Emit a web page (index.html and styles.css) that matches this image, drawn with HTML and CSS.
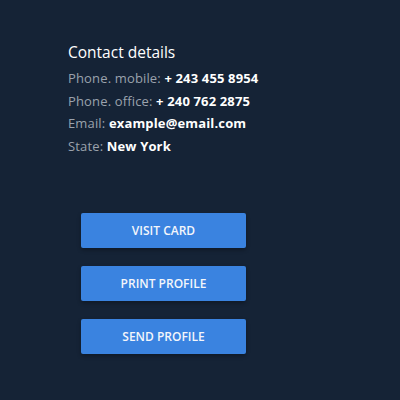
FILE: index.html
```html
<!DOCTYPE html>
<html>
<head>
<meta charset="utf-8">
<link rel="stylesheet" href="styles.css">
</head>
<body>
<div class="page">
  <section class="contact">
    <h2 class="title">Contact details</h2>
    <ul class="list">
      <li><span class="label">Phone. mobile:</span> <b>+ 243 455 8954</b></li>
      <li><span class="label">Phone. office:</span> <b>+ 240 762 2875</b></li>
      <li><span class="label">Email:</span> <b>example@email.com</b></li>
      <li><span class="label">State:</span> <b>New York</b></li>
    </ul>
  </section>
  <div class="actions">
    <button class="btn">VISIT CARD</button>
    <button class="btn">PRINT PROFILE</button>
    <button class="btn">SEND PROFILE</button>
  </div>
</div>
</body>
</html>
```
FILE: styles.css
```css
html, body {
  margin: 0;
  padding: 0;
  background: #152336;
  width: 400px;
  height: 400px;
  overflow: hidden;
}
.page {
  font-family: "Open Sans", "Liberation Sans", sans-serif;
  padding: 42px 0 0 68px;
}
.title {
  margin: 0 0 5px;
  font-size: 15.5px;
  font-weight: 400;
  color: #ffffff;
  line-height: 20px;
}
.list {
  list-style: none;
  margin: 0;
  padding: 0;
}
.list li {
  font-size: 13px;
  line-height: 22.7px;
  color: #ffffff;
  letter-spacing: 0.15px;
}
.label {
  color: #9aa2ad;
}
.list b {
  font-weight: 700;
}
.actions {
  display: flex;
  flex-direction: column;
  gap: 18px;
  margin: 55px 0 0 13px;
}
.btn {
  width: 165px;
  height: 35px;
  border: 0;
  border-radius: 2px;
  background: #3a83e0;
  color: #f3f6fb;
  font-family: inherit;
  font-size: 12px;
  font-weight: 600;
  box-shadow: 0 2px 4px rgba(0,0,0,0.3);
  padding: 0;
}
```
